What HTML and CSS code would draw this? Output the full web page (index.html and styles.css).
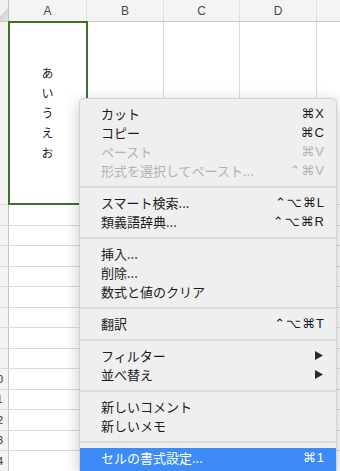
FILE: index.html
```html
<!DOCTYPE html>
<html lang="ja">
<head>
  <meta charset="UTF-8">
  <title>シート - コンテキストメニュー</title>
  <link rel="stylesheet" href="styles.css">
</head>
<body>
  <div class="sheet">
    <!-- Column headers -->
    <div class="row head">
      <div class="rh corner"></div>
      <div class="cell col-a">A</div>
      <div class="cell col-b">B</div>
      <div class="cell col-c">C</div>
      <div class="cell col-d">D</div>
      <div class="cell col-e"></div>
    </div>

    <!-- Row 1 (selected cell) -->
    <div class="row r1">
      <div class="rh"></div>
      <div class="cell col-a selected"><span class="vtext">あいうえお</span></div>
      <div class="cell col-b"></div>
      <div class="cell col-c"></div>
      <div class="cell col-d"></div>
      <div class="cell col-e"></div>
    </div>

    <!-- rows 2-9: numbers sit left of the visible area -->
    <div class="row"><div class="rh"></div><div class="cell col-a"></div><div class="cell col-b"></div><div class="cell col-c"></div><div class="cell col-d"></div><div class="cell col-e"></div></div>
    <div class="row"><div class="rh"></div><div class="cell col-a"></div><div class="cell col-b"></div><div class="cell col-c"></div><div class="cell col-d"></div><div class="cell col-e"></div></div>
    <div class="row"><div class="rh"></div><div class="cell col-a"></div><div class="cell col-b"></div><div class="cell col-c"></div><div class="cell col-d"></div><div class="cell col-e"></div></div>
    <div class="row"><div class="rh"></div><div class="cell col-a"></div><div class="cell col-b"></div><div class="cell col-c"></div><div class="cell col-d"></div><div class="cell col-e"></div></div>
    <div class="row"><div class="rh"></div><div class="cell col-a"></div><div class="cell col-b"></div><div class="cell col-c"></div><div class="cell col-d"></div><div class="cell col-e"></div></div>
    <div class="row"><div class="rh"></div><div class="cell col-a"></div><div class="cell col-b"></div><div class="cell col-c"></div><div class="cell col-d"></div><div class="cell col-e"></div></div>
    <div class="row"><div class="rh"></div><div class="cell col-a"></div><div class="cell col-b"></div><div class="cell col-c"></div><div class="cell col-d"></div><div class="cell col-e"></div></div>
    <div class="row"><div class="rh"></div><div class="cell col-a"></div><div class="cell col-b"></div><div class="cell col-c"></div><div class="cell col-d"></div><div class="cell col-e"></div></div>
    <div class="row"><div class="rh"><span>10</span></div><div class="cell col-a"></div><div class="cell col-b"></div><div class="cell col-c"></div><div class="cell col-d"></div><div class="cell col-e"></div></div>
    <div class="row"><div class="rh"><span>11</span></div><div class="cell col-a"></div><div class="cell col-b"></div><div class="cell col-c"></div><div class="cell col-d"></div><div class="cell col-e"></div></div>
    <div class="row"><div class="rh"><span>12</span></div><div class="cell col-a"></div><div class="cell col-b"></div><div class="cell col-c"></div><div class="cell col-d"></div><div class="cell col-e"></div></div>
    <div class="row"><div class="rh"><span>13</span></div><div class="cell col-a"></div><div class="cell col-b"></div><div class="cell col-c"></div><div class="cell col-d"></div><div class="cell col-e"></div></div>
    <div class="row"><div class="rh"><span>14</span></div><div class="cell col-a"></div><div class="cell col-b"></div><div class="cell col-c"></div><div class="cell col-d"></div><div class="cell col-e"></div></div>
  </div>

  <!-- Context menu -->
  <ul class="ctx-menu">
    <li class="item"><span class="label">カット</span><span class="key">⌘X</span></li>
    <li class="item"><span class="label">コピー</span><span class="key">⌘C</span></li>
    <li class="item disabled"><span class="label">ペースト</span><span class="key">⌘V</span></li>
    <li class="item disabled"><span class="label">形式を選択してペースト...</span><span class="key">⌃⌘V</span></li>
    <li class="sep"></li>
    <li class="item"><span class="label">スマート検索...</span><span class="key">⌃⌥⌘L</span></li>
    <li class="item"><span class="label">類義語辞典...</span><span class="key">⌃⌥⌘R</span></li>
    <li class="sep"></li>
    <li class="item"><span class="label">挿入...</span></li>
    <li class="item"><span class="label">削除...</span></li>
    <li class="item"><span class="label">数式と値のクリア</span></li>
    <li class="sep"></li>
    <li class="item"><span class="label">翻訳</span><span class="key">⌃⌥⌘T</span></li>
    <li class="sep"></li>
    <li class="item"><span class="label">フィルター</span>
      <svg class="arrow" width="8" height="9" viewBox="0 0 8 9"><path d="M0 0 L8 4.5 L0 9 Z" fill="#2a2a2a"/></svg>
    </li>
    <li class="item"><span class="label">並べ替え</span>
      <svg class="arrow" width="8" height="9" viewBox="0 0 8 9"><path d="M0 0 L8 4.5 L0 9 Z" fill="#2a2a2a"/></svg>
    </li>
    <li class="sep"></li>
    <li class="item"><span class="label">新しいコメント</span></li>
    <li class="item"><span class="label">新しいメモ</span></li>
    <li class="sep"></li>
    <li class="item active"><span class="label">セルの書式設定...</span><span class="key">⌘1</span></li>
  </ul>
</body>
</html>
```

FILE: styles.css
```css
* {
  box-sizing: border-box;
}

body {
  margin: 0;
  width: 340px;
  height: 471px;
  overflow: hidden;
  background: #fff;
  font-family: 'Liberation Sans', 'Noto Sans CJK JP', sans-serif;
  position: relative;
}

/* ---------- spreadsheet ---------- */

.sheet {
  display: flex;
  flex-direction: column;
}

.row {
  display: flex;
  height: 20.5px;
  border-bottom: 1px solid #dadada;
  flex-shrink: 0;
}

.row.head {
  height: 22px;
  background: #f4f4f4;
  border-bottom: 1px solid #c8c8c8;
}

.row.r1 {
  height: 183px;
}

.rh {
  width: 9px;
  flex-shrink: 0;
  background: #f3f3f3;
  border-right: 1px solid #c2c2c2;
  overflow: hidden;
  display: flex;
  align-items: center;
}

.rh span {
  flex-shrink: 0;
  width: 22px;
  margin-left: -14px;
  text-align: center;
  font-size: 11px;
  color: #3a3a3a;
}

.corner {
  background: linear-gradient(135deg, #f1f1f1 55%, #d2d2d2 56%, #e6e6e6 100%);
}

.cell {
  flex-shrink: 0;
  border-right: 1px solid #dadada;
}

.head .cell {
  display: flex;
  align-items: center;
  justify-content: center;
  font-size: 12px;
  color: #4a4a4a;
  border-right-color: #e0e0e0;
}

.col-a { width: 78px; }
.col-b { width: 77px; }
.col-c { width: 76px; }
.col-d { width: 77px; }
.col-e { flex: 1; border-right: none; }

.cell.selected {
  outline: 2px solid #3b7229;
  outline-offset: -1px;
  display: flex;
  align-items: center;
  justify-content: center;
}

.vtext {
  writing-mode: vertical-rl;
  text-orientation: upright;
  font-family: 'Noto Sans CJK JP', sans-serif;
  font-size: 12px;
  letter-spacing: 8px;
  margin-bottom: -8px;
  color: #1f1f1f;
}

/* ---------- context menu ---------- */

.ctx-menu {
  position: absolute;
  left: 79px;
  top: 98px;
  width: 258px;
  margin: 0;
  padding: 5px 0 0;
  list-style: none;
  background: #efefef;
  border: 1px solid rgba(0, 0, 0, 0.12);
  border-bottom: none;
  border-radius: 5px 5px 0 0;
  box-shadow: 0 4px 16px rgba(0, 0, 0, 0.22);
  font-family: 'Noto Sans CJK JP', sans-serif;
  font-size: 13px;
  color: #1c1c1c;
}

.ctx-menu .item {
  display: flex;
  align-items: center;
  justify-content: space-between;
  height: 19px;
  line-height: 19px;
  padding: 0 11px 0 21px;
  white-space: nowrap;
}

.ctx-menu .item.disabled {
  color: #b2b2b2;
}

.ctx-menu .key {
  font-family: 'Liberation Sans', 'DejaVu Sans', 'Noto Sans CJK JP', sans-serif;
  font-size: 13px;
  letter-spacing: 1px;
}

.ctx-menu .arrow {
  margin-right: 2px;
}

.ctx-menu .sep {
  height: 2px;
  margin: 6px 0 5px;
  background: #dadada;
}

.ctx-menu .item.active {
  height: 23px;
  align-items: flex-start;
  background: #3d8bf6;
  color: #fff;
}
```
